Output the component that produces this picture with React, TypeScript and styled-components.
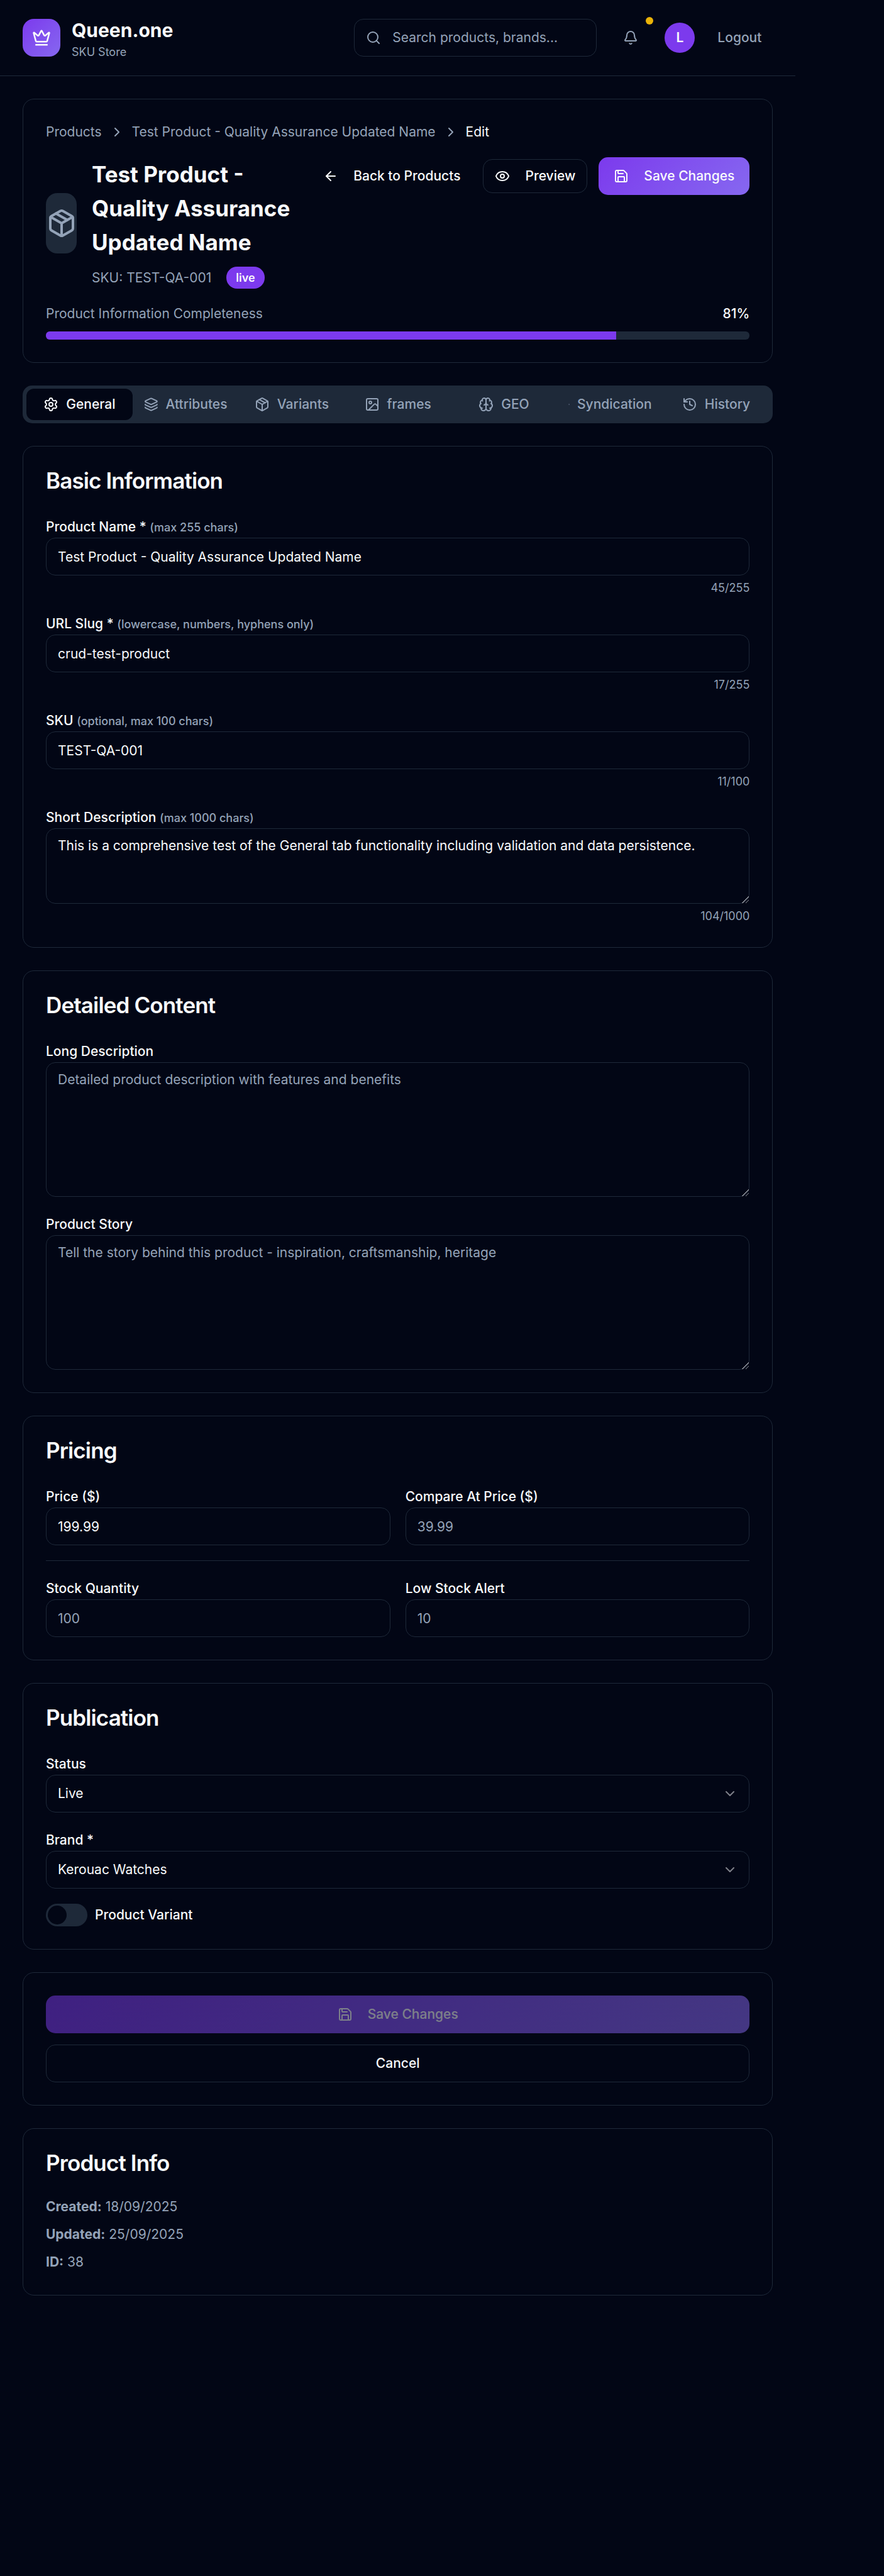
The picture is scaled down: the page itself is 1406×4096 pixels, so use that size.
import React from "react";
import styled, { createGlobalStyle, css } from "styled-components";
import {
  ArrowLeft,
  Bell,
  Brain,
  ChevronDown,
  ChevronRight,
  Crown,
  Eye,
  History,
  Image,
  Layers,
  Package,
  Save,
  Search,
  Settings,
  Share2,
} from "lucide-react";

const color = {
  bg: "#020615",
  text: "#f8fafc",
  muted: "#94a3b8",
  line: "#1e2939",
  primary: "#7c3aed",
  primaryEnd: "#8668f0",
  warning: "#eab308",
  grip: "#8b8f98",
};

const gradient = `linear-gradient(135deg, ${color.primary}, ${color.primaryEnd})`;

const GlobalStyle = createGlobalStyle`
  *, *::before, *::after { box-sizing: border-box; }
  html { background: ${color.bg}; color-scheme: dark; }
  body {
    margin: 0;
    min-height: 100vh;
    background: ${color.bg};
    color: ${color.text};
    font-family: Inter, "Liberation Sans", sans-serif;
    font-size: 21px;
    line-height: 32px;
    -webkit-font-smoothing: antialiased;
  }
  button, input, textarea, select { font: inherit; color: inherit; }
  h1, h2, p, ol, dl, dd { margin: 0; padding: 0; }
`;

const Shell = styled.div`
  width: 90%;
`;

const TopBar = styled.header`
  display: flex;
  align-items: center;
  justify-content: space-between;
  height: 121px;
  padding: 0 36px;
  border-bottom: 1px solid ${color.line};
`;

const Brand = styled.div`
  display: flex;
  align-items: center;
  gap: 18px;
`;

const Logo = styled.div`
  display: grid;
  place-items: center;
  width: 60px;
  height: 60px;
  border-radius: 18px;
  background: ${gradient};
`;

const BrandName = styled.div`
  font-size: 30px;
  line-height: 45px;
  font-weight: 700;
`;

const BrandSub = styled.div`
  font-size: 18px;
  line-height: 24px;
  color: ${color.muted};
`;

const TopActions = styled.div`
  display: flex;
  align-items: center;
  gap: 24px;
`;

const SearchBox = styled.label`
  display: flex;
  align-items: center;
  gap: 18px;
  width: 386px;
  height: 60px;
  padding: 0 18px;
  border: 1px solid ${color.line};
  border-radius: 15px;
  color: ${color.muted};
`;

const SearchInput = styled.input`
  flex: 1;
  min-width: 0;
  padding: 0;
  border: 0;
  outline: 0;
  background: transparent;
  &::placeholder { color: ${color.muted}; opacity: 1; }
`;

const BellButton = styled.button`
  position: relative;
  display: grid;
  place-items: center;
  width: 60px;
  height: 60px;
  padding: 0;
  border: 0;
  background: none;
  color: ${color.muted};
`;

const Dot = styled.span`
  position: absolute;
  top: -3px;
  right: -6px;
  width: 12px;
  height: 12px;
  border-radius: 50%;
  background: ${color.warning};
`;

const Account = styled.div`
  display: flex;
  align-items: center;
  gap: 18px;
`;

const Avatar = styled.div`
  display: grid;
  place-items: center;
  width: 48px;
  height: 48px;
  border-radius: 50%;
  background: ${color.primary};
  font-weight: 600;
`;

const Main = styled.main`
  display: flex;
  flex-direction: column;
  gap: 36px;
  padding: 36px;
`;

const Card = styled.section`
  display: flex;
  flex-direction: column;
  padding: 36px;
  border: 1px solid ${color.line};
  border-radius: 18px;
`;

const ActionCard = styled(Card)`
  gap: 18px;
`;

const CardTitle = styled.h2`
  margin-bottom: 36px;
  font-size: 35px;
  line-height: 36px;
  font-weight: 600;
  letter-spacing: -0.025em;
`;

const Crumbs = styled.ol`
  display: flex;
  align-items: center;
  gap: 12px;
  list-style: none;
  margin-bottom: 24px;
  color: ${color.muted};
`;

const Crumb = styled.li<{ $current?: boolean }>`
  display: flex;
  ${(p) => p.$current && css`color: ${color.text};`}
  a { color: inherit; text-decoration: none; }
`;

const TitleRow = styled.div`
  display: flex;
  align-items: flex-start;
  justify-content: space-between;
  margin-bottom: 24px;
`;

const TitleGroup = styled.div`
  display: flex;
  flex: 1;
  align-items: center;
  gap: 24px;
`;

const ProductThumb = styled.div`
  display: grid;
  place-items: center;
  width: 49px;
  height: 96px;
  border-radius: 18px;
  background: ${color.line};
  color: ${color.muted};
`;

const TitleText = styled.div`
  flex: 1;
`;

const PageTitle = styled.h1`
  font-size: 35px;
  line-height: 54px;
  font-weight: 700;
`;

const SkuRow = styled.div`
  display: flex;
  align-items: center;
  gap: 24px;
  margin-top: 12px;
  color: ${color.muted};
`;

const Badge = styled.span`
  padding: 4px 15px;
  border-radius: 17px;
  background: ${color.primary};
  color: ${color.text};
  font-size: 18px;
  line-height: 27px;
  font-weight: 600;
`;

const ButtonRow = styled.div`
  display: flex;
  align-items: center;
  gap: 18px;
`;

type Look = "primary" | "outline" | "ghost";

const Button = styled.button<{ $look: Look; $small?: boolean }>`
  display: inline-flex;
  align-items: center;
  justify-content: center;
  gap: 24px;
  height: ${(p) => (p.$small ? 54 : 60)}px;
  padding: 0 ${(p) => (p.$small ? 18 : 24)}px;
  border: ${(p) => (p.$look === "outline" ? `1px solid ${color.line}` : "0")};
  border-radius: 15px;
  background: ${(p) => (p.$look === "primary" ? gradient : "transparent")};
  font-weight: 500;
  white-space: nowrap;
  &:disabled { opacity: 0.5; }
`;

const LogoutButton = styled(Button)`
  color: ${color.muted};
`;

const MeterHead = styled.div`
  display: flex;
  justify-content: space-between;
  margin-bottom: 12px;
  color: ${color.muted};
`;

const MeterValue = styled.span`
  color: ${color.text};
  font-weight: 500;
`;

const Meter = styled.div`
  height: 13px;
  border-radius: 6px;
  overflow: hidden;
  background: ${color.line};
`;

const MeterFill = styled.div`
  height: 100%;
  background: ${color.primary};
`;

const Tabs = styled.nav`
  display: grid;
  grid-template-columns: repeat(7, minmax(0, 1fr));
  height: 60px;
  padding: 5px 6px;
  border-radius: 15px;
  background: ${color.line};
`;

const Tab = styled.button<{ $active?: boolean }>`
  display: flex;
  align-items: center;
  justify-content: center;
  gap: 12px;
  padding: 0 18px;
  border: 0;
  border-radius: 12px;
  background: ${(p) => (p.$active ? color.bg : "transparent")};
  color: ${(p) => (p.$active ? color.text : color.muted)};
  font-weight: 500;
  white-space: nowrap;
`;

const Fields = styled.div`
  display: flex;
  flex-direction: column;
  gap: 24px;
`;

const Pair = styled.div`
  display: grid;
  grid-template-columns: 1fr 1fr;
  gap: 24px;
`;

const Rule = styled.hr`
  width: 100%;
  height: 1px;
  margin: 0;
  border: 0;
  background: ${color.line};
`;

const FieldBox = styled.div`
  display: flex;
  flex-direction: column;
`;

const FieldLabel = styled.label`
  padding-top: 3px;
  line-height: 34px;
  font-weight: 500;
`;

const Hint = styled.span`
  font-size: 18px;
  line-height: 18px;
  color: ${color.muted};
`;

const control = css`
  width: 100%;
  border: 1px solid ${color.line};
  border-radius: 15px;
  outline: 0;
  background: ${color.bg};
  color: ${color.text};
  &::placeholder { color: ${color.muted}; opacity: 1; }
`;

const TextInput = styled.input`
  ${control}
  height: 60px;
  padding: 0 18px;
`;

const TextArea = styled.textarea<{ $h: number }>`
  ${control}
  display: block;
  height: ${(p) => p.$h}px;
  padding: 12px 18px;
  line-height: 30px;
  resize: vertical;
  &::-webkit-resizer {
    background: linear-gradient(
      135deg,
      transparent 62%,
      ${color.grip} 62% 67%,
      transparent 67% 81%,
      ${color.grip} 81% 86%,
      transparent 86%
    );
  }
`;

const Counter = styled.div`
  margin-top: 6px;
  font-size: 18px;
  line-height: 27px;
  text-align: right;
  color: ${color.muted};
`;

const SelectWrap = styled.div`
  display: grid;
  align-items: center;
  > * { grid-area: 1 / 1; }
  > svg {
    justify-self: end;
    margin-right: 19px;
    opacity: 0.5;
    pointer-events: none;
  }
`;

const SelectInput = styled.select`
  ${control}
  appearance: none;
  height: 60px;
  padding: 0 18px;
`;

const SwitchRow = styled.label`
  display: flex;
  align-items: center;
  gap: 12px;
  font-weight: 500;
`;

const Switch = styled.input`
  appearance: none;
  width: 66px;
  height: 36px;
  margin: 0;
  padding: 3px;
  border-radius: 18px;
  background: ${color.line};
  &::before {
    content: "";
    display: block;
    width: 30px;
    height: 30px;
    border-radius: 50%;
    background: ${color.bg};
  }
  &:checked { background: ${color.primary}; }
  &:checked::before { margin-left: auto; }
`;

const InfoList = styled.dl`
  display: flex;
  flex-direction: column;
  gap: 12px;
  color: ${color.muted};
`;

const InfoRow = styled.div`
  display: flex;
  gap: 6px;
  dt { font-weight: 700; }
`;

const tabs = [
  { name: "General", Icon: Settings },
  { name: "Attributes", Icon: Layers },
  { name: "Variants", Icon: Package },
  { name: "frames", Icon: Image },
  { name: "GEO", Icon: Brain },
  { name: "Syndication", Icon: Share2 },
  { name: "History", Icon: History },
];

const info = [
  ["Created:", "18/09/2025"],
  ["Updated:", "25/09/2025"],
  ["ID:", "38"],
];

interface FieldProps {
  id: string;
  label: string;
  hint?: string;
  value?: string;
  placeholder?: string;
  count?: string;
  areaHeight?: number;
}

function Field({ id, label, hint, value, placeholder, count, areaHeight }: FieldProps) {
  return (
    <FieldBox>
      <FieldLabel htmlFor={id}>
        {label} {hint && <Hint>{hint}</Hint>}
      </FieldLabel>
      {areaHeight ? (
        <TextArea id={id} $h={areaHeight} defaultValue={value} placeholder={placeholder} />
      ) : (
        <TextInput id={id} defaultValue={value} placeholder={placeholder} />
      )}
      {count && <Counter>{count}</Counter>}
    </FieldBox>
  );
}

function SelectField({ id, label, option }: { id: string; label: string; option: string }) {
  return (
    <FieldBox>
      <FieldLabel htmlFor={id}>{label}</FieldLabel>
      <SelectWrap>
        <SelectInput id={id}>
          <option>{option}</option>
        </SelectInput>
        <ChevronDown size={24} />
      </SelectWrap>
    </FieldBox>
  );
}

export default function App() {
  const completeness = 81;
  return (
    <>
      <GlobalStyle />
      <Shell>
        <TopBar>
          <Brand>
            <Logo>
              <Crown size={30} />
            </Logo>
            <div>
              <BrandName>Queen.one</BrandName>
              <BrandSub>SKU Store</BrandSub>
            </div>
          </Brand>
          <TopActions>
            <SearchBox>
              <Search size={24} />
              <SearchInput placeholder="Search products, brands..." aria-label="Search" />
            </SearchBox>
            <BellButton aria-label="Notifications">
              <Bell size={24} />
              <Dot />
            </BellButton>
            <Account>
              <Avatar>L</Avatar>
              <LogoutButton $look="ghost" $small>
                Logout
              </LogoutButton>
            </Account>
          </TopActions>
        </TopBar>

        <Main>
          <Card>
            <nav aria-label="Breadcrumb">
              <Crumbs>
                <Crumb>
                  <a href="#products">Products</a>
                </Crumb>
                <ChevronRight size={24} />
                <Crumb>
                  <a href="#product">Test Product - Quality Assurance Updated Name</a>
                </Crumb>
                <ChevronRight size={24} />
                <Crumb $current>Edit</Crumb>
              </Crumbs>
            </nav>
            <TitleRow>
              <TitleGroup>
                <ProductThumb>
                  <Package size={48} />
                </ProductThumb>
                <TitleText>
                  <PageTitle>Test Product - Quality Assurance Updated Name</PageTitle>
                  <SkuRow>
                    <span>SKU: TEST-QA-001</span>
                    <Badge>live</Badge>
                  </SkuRow>
                </TitleText>
              </TitleGroup>
              <ButtonRow>
                <Button $look="ghost" $small>
                  <ArrowLeft size={24} />
                  Back to Products
                </Button>
                <Button $look="outline" $small>
                  <Eye size={24} />
                  Preview
                </Button>
                <Button $look="primary">
                  <Save size={24} />
                  Save Changes
                </Button>
              </ButtonRow>
            </TitleRow>
            <MeterHead>
              <span>Product Information Completeness</span>
              <MeterValue>{completeness}%</MeterValue>
            </MeterHead>
            <Meter>
              <MeterFill style={{ width: `${completeness}%` }} />
            </Meter>
          </Card>

          <Tabs>
            {tabs.map(({ name, Icon }) => (
              <Tab key={name} $active={name === "General"}>
                <Icon size={24} />
                {name}
              </Tab>
            ))}
          </Tabs>

          <Card>
            <CardTitle>Basic Information</CardTitle>
            <Fields>
              <Field
                id="name"
                label="Product Name *"
                hint="(max 255 chars)"
                value="Test Product - Quality Assurance Updated Name"
                count="45/255"
              />
              <Field
                id="slug"
                label="URL Slug *"
                hint="(lowercase, numbers, hyphens only)"
                value="crud-test-product"
                count="17/255"
              />
              <Field
                id="sku"
                label="SKU"
                hint="(optional, max 100 chars)"
                value="TEST-QA-001"
                count="11/100"
              />
              <Field
                id="short"
                label="Short Description"
                hint="(max 1000 chars)"
                value="This is a comprehensive test of the General tab functionality including validation and data persistence."
                count="104/1000"
                areaHeight={120}
              />
            </Fields>
          </Card>

          <Card>
            <CardTitle>Detailed Content</CardTitle>
            <Fields>
              <Field
                id="long"
                label="Long Description"
                placeholder="Detailed product description with features and benefits"
                areaHeight={214}
              />
              <Field
                id="story"
                label="Product Story"
                placeholder="Tell the story behind this product - inspiration, craftsmanship, heritage"
                areaHeight={214}
              />
            </Fields>
          </Card>

          <Card>
            <CardTitle>Pricing</CardTitle>
            <Fields>
              <Pair>
                <Field id="price" label="Price ($)" value="199.99" />
                <Field id="compare" label="Compare At Price ($)" placeholder="39.99" />
              </Pair>
              <Rule />
              <Pair>
                <Field id="stock" label="Stock Quantity" placeholder="100" />
                <Field id="low" label="Low Stock Alert" placeholder="10" />
              </Pair>
            </Fields>
          </Card>

          <Card>
            <CardTitle>Publication</CardTitle>
            <Fields>
              <SelectField id="status" label="Status" option="Live" />
              <SelectField id="brand" label="Brand *" option="Kerouac Watches" />
              <SwitchRow>
                <Switch type="checkbox" role="switch" />
                Product Variant
              </SwitchRow>
            </Fields>
          </Card>

          <ActionCard>
            <Button $look="primary" disabled>
              <Save size={24} />
              Save Changes
            </Button>
            <Button $look="outline">Cancel</Button>
          </ActionCard>

          <Card>
            <CardTitle>Product Info</CardTitle>
            <InfoList>
              {info.map(([term, value]) => (
                <InfoRow key={term}>
                  <dt>{term}</dt>
                  <dd>{value}</dd>
                </InfoRow>
              ))}
            </InfoList>
          </Card>
        </Main>
      </Shell>
    </>
  );
}
